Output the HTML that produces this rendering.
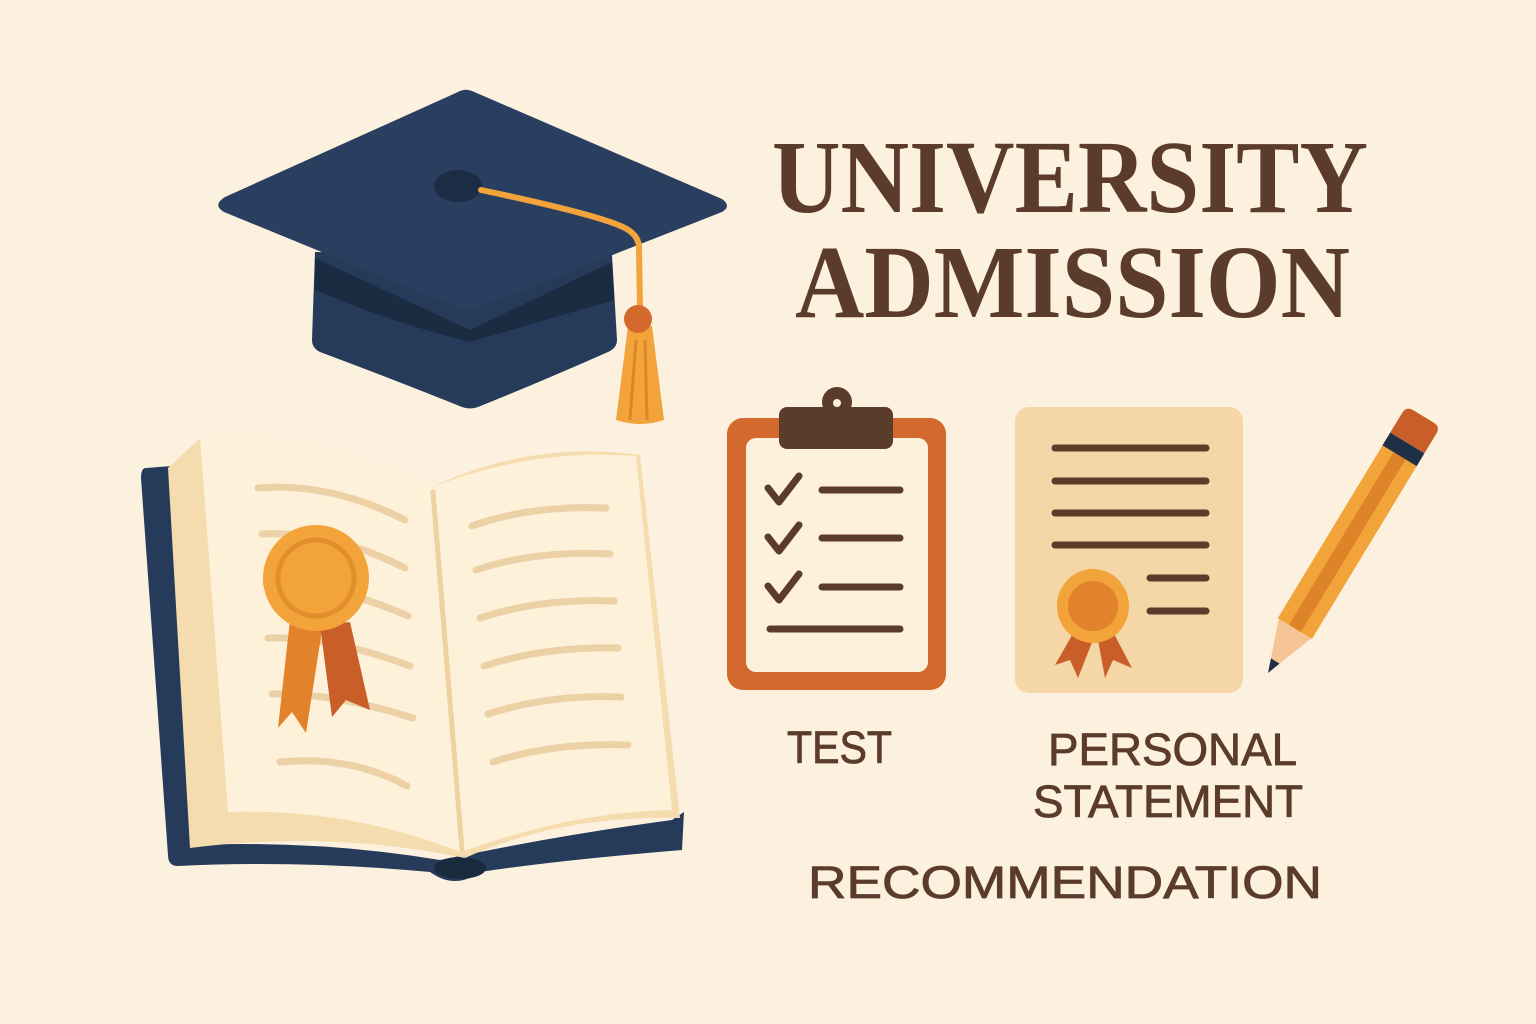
<!DOCTYPE html>
<html><head><meta charset="utf-8"><style>
html,body{margin:0;padding:0;background:#fcf0de;}
svg{display:block;}
</style></head><body>
<svg width="1536" height="1024" viewBox="0 0 1536 1024" xmlns="http://www.w3.org/2000/svg">
<rect width="1536" height="1024" fill="#fcf0de"/>

<!-- Cap -->
<path d="M315 252 L612 255 L617 340 Q617 348 608 352 Q545 380 478 407 Q470 410 462 407 Q395 380 320 352 Q312 348 312 340 Z" fill="#263b5a"/>
<path d="M315 258 L470 330 L612 262 L614 300 L470 342 Q390 322 315 290 Z" fill="#1b2b42"/>
<path d="M225 197 L458 92 Q465 88 472 91 L722 199 Q732 206 722 212 L480 307 Q468 312 456 307 L224 212 Q212 205 225 197 Z" fill="#2a3f60"/>
<ellipse cx="458" cy="186" rx="24" ry="16" fill="#1c2c45"/>
<path d="M481 190 Q600 215 625 228 Q640 236 639 250 L640 306" fill="none" stroke="#f2a33a" stroke-width="6" stroke-linecap="round"/>
<path d="M628 326 L616 420 Q640 428 664 420 L652 326 Z" fill="#f2a33a"/>
<path d="M636 340 L630 420 M645 340 L647 420" stroke="#dd8428" stroke-width="3"/>
<circle cx="638" cy="319" r="14" fill="#d4692e"/>

<!-- Title -->
<g font-family="'Liberation Serif',serif" font-weight="bold" fill="#5b3b29">
<text x="772" y="212" font-size="104" textLength="596" lengthAdjust="spacingAndGlyphs">UNIVERSITY</text>
<text x="795" y="317" font-size="104" textLength="555" lengthAdjust="spacingAndGlyphs">ADMISSION</text>
</g>

<!-- Book -->
<path d="M146 468 L172 466 L190 845 Q320 840 440 860 Q560 835 672 820 L684 812 L682 850 Q560 860 480 872 Q455 890 430 872 Q300 860 178 866 Q168 866 168 855 L141 478 Q141 468 146 468 Z" fill="#263b5a"/>
<ellipse cx="460" cy="868" rx="26" ry="11" fill="#1b2b3e"/>
<path d="M168 468 L198 440 Q330 440 430 490 L465 858 Q330 830 190 848 Z" fill="#f5dcae"/>
<path d="M200 437 Q330 430 430 488 L460 852 Q350 808 228 812 Z" fill="#fdf1da"/>
<path d="M430 488 Q530 440 640 455 L680 818 Q560 815 465 858 Z" fill="#f5dcae"/>
<path d="M430 488 Q530 448 636 456 L672 810 Q570 812 462 852 Z" fill="#fdf1da"/>
<path d="M433 492 L462 850" stroke="#f0d2a0" stroke-width="5" stroke-linecap="round"/>
<g fill="none" stroke="#ecd0a6" stroke-width="7" stroke-linecap="round">
<path d="M258 488 Q330 482 405 520"/>
<path d="M262 534 Q330 530 405 568"/>
<path d="M266 584 Q330 582 408 616"/>
<path d="M268 638 Q330 636 410 666"/>
<path d="M272 694 Q330 692 413 718"/>
<path d="M280 762 Q350 755 407 786"/>
<path d="M472 526 Q530 505 606 508"/>
<path d="M476 570 Q535 550 610 554"/>
<path d="M480 618 Q540 598 614 601"/>
<path d="M484 666 Q545 646 618 648"/>
<path d="M488 714 Q550 694 621 697"/>
<path d="M493 762 Q555 742 628 745"/>
</g>
<path d="M290 620 L278 728 L292 712 L306 733 L322 630 Z" fill="#e2822b"/>
<path d="M320 625 L332 717 L346 700 L370 710 L350 622 Z" fill="#c95e29"/>
<circle cx="316" cy="578" r="53" fill="#f2a33a"/>
<circle cx="316" cy="578" r="38" fill="none" stroke="#e28e2e" stroke-width="5"/>

<!-- Clipboard -->
<rect x="727" y="418" width="219" height="272" rx="16" fill="#d4692e"/>
<rect x="746" y="438" width="182" height="234" rx="10" fill="#fdf1dc"/>
<circle cx="837" cy="402" r="15" fill="#5b3b29"/>
<circle cx="837" cy="403" r="4" fill="#fdf1dc"/>
<rect x="779" y="407" width="114" height="42" rx="8" fill="#5b3b29"/>
<g fill="none" stroke="#5b3b29" stroke-width="7" stroke-linecap="round" stroke-linejoin="round">
<path d="M768 488 L779 502 L799 476"/>
<path d="M768 537 L779 551 L799 525"/>
<path d="M768 586 L779 600 L799 574"/>
<path d="M822 490 L900 490 M822 538 L900 538 M822 587 L900 587 M770 629 L900 629"/>
</g>

<!-- Certificate -->
<rect x="1015" y="407" width="228" height="286" rx="14" fill="#f5d6a6"/>
<g stroke="#5b3b29" stroke-width="7" stroke-linecap="round">
<path d="M1055 448 L1206 448 M1055 481 L1206 481 M1055 513 L1206 513 M1055 545 L1206 545 M1150 578 L1206 578 M1150 611 L1206 611"/>
</g>
<path d="M1075 630 L1055 665 L1070 660 L1078 678 L1093 640 Z" fill="#c95e29"/>
<path d="M1098 640 L1105 678 L1113 660 L1132 668 L1112 630 Z" fill="#c95e29"/>
<ellipse cx="1093" cy="606" rx="36" ry="37" fill="#f2a33a"/>
<ellipse cx="1093" cy="606" rx="25" ry="25" fill="#e2822b"/>

<!-- Pencil -->
<g transform="translate(1268,673) rotate(-58.8)">
<path d="M0 0 L55 -20 L55 20 Z" fill="#f6c596"/>
<path d="M0 0 L14 -5 L14 5 Z" fill="#1f2f45"/>
<rect x="52" y="-20" width="206" height="40" fill="#f2a33a"/>
<rect x="52" y="-7" width="206" height="14" fill="#dd8428"/>
<rect x="254" y="-20" width="15" height="40" fill="#1f2f45"/>
<path d="M269 -20 L292 -20 Q300 -20 300 -12 L300 12 Q300 20 292 20 L269 20 Z" fill="#c95e29"/>
</g>

<!-- Labels -->
<g font-family="'Liberation Sans','DejaVu Sans',sans-serif" fill="#5b3b29" font-size="45" stroke="#5b3b29" stroke-width="0.8">
<text x="787" y="763" textLength="105" lengthAdjust="spacingAndGlyphs">TEST</text>
<text x="1048" y="765" textLength="249" lengthAdjust="spacingAndGlyphs">PERSONAL</text>
<text x="1033" y="817" textLength="270" lengthAdjust="spacingAndGlyphs">STATEMENT</text>
<text x="808" y="898" textLength="514" lengthAdjust="spacingAndGlyphs">RECOMMENDATION</text>
</g>
</svg>
</body></html>
